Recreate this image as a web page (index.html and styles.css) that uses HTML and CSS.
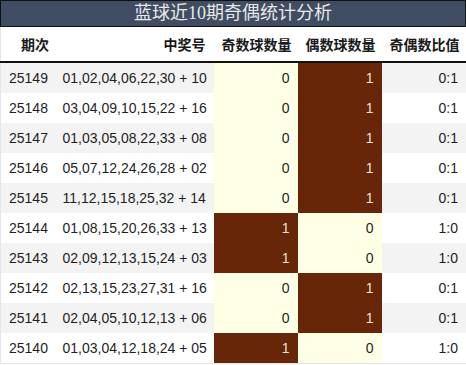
FILE: index.html
```html
<!DOCTYPE html>
<html lang="zh">
<head>
<meta charset="utf-8">
<title>蓝球近10期奇偶统计分析</title>
<link rel="stylesheet" href="styles.css">
</head>
<body>
<div class="title">蓝球近10期奇偶统计分析</div>
<table class="stats">
  <colgroup>
    <col class="c-issue"><col class="c-nums"><col class="c-odd"><col class="c-even"><col class="c-ratio">
  </colgroup>
  <thead>
    <tr><th class="first">期次</th><th class="nums">中奖号</th><th>奇数球数量</th><th>偶数球数量</th><th>奇偶数比值</th></tr>
  </thead>
  <tbody>
    <tr><td class="first">25149</td><td class="nums">01,02,04,06,22,30 + 10</td><td class="no">0</td><td class="yes">1</td><td>0:1</td></tr>
    <tr><td class="first">25148</td><td class="nums">03,04,09,10,15,22 + 16</td><td class="no">0</td><td class="yes">1</td><td>0:1</td></tr>
    <tr><td class="first">25147</td><td class="nums">01,03,05,08,22,33 + 08</td><td class="no">0</td><td class="yes">1</td><td>0:1</td></tr>
    <tr><td class="first">25146</td><td class="nums">05,07,12,24,26,28 + 02</td><td class="no">0</td><td class="yes">1</td><td>0:1</td></tr>
    <tr><td class="first">25145</td><td class="nums">11,12,15,18,25,32 + 14</td><td class="no">0</td><td class="yes">1</td><td>0:1</td></tr>
    <tr><td class="first">25144</td><td class="nums">01,08,15,20,26,33 + 13</td><td class="yes">1</td><td class="no">0</td><td>1:0</td></tr>
    <tr><td class="first">25143</td><td class="nums">02,09,12,13,15,24 + 03</td><td class="yes">1</td><td class="no">0</td><td>1:0</td></tr>
    <tr><td class="first">25142</td><td class="nums">02,13,15,23,27,31 + 16</td><td class="no">0</td><td class="yes">1</td><td>0:1</td></tr>
    <tr><td class="first">25141</td><td class="nums">02,04,05,10,12,13 + 06</td><td class="no">0</td><td class="yes">1</td><td>0:1</td></tr>
    <tr><td class="first">25140</td><td class="nums">01,03,04,12,18,24 + 05</td><td class="yes">1</td><td class="no">0</td><td>1:0</td></tr>
  </tbody>
</table>
</body>
</html>
```
FILE: styles.css
```css
html, body {
  margin: 0;
  padding: 0;
  background: #ffffff;
}

.title {
  box-sizing: border-box;
  width: 466px;
  height: 27px;
  border: 1px solid #111111;
  background: #3f4c62;
  color: #e8e8e8;
  font-family: "Liberation Serif", "Noto Sans CJK SC", serif;
  font-size: 18px;
  line-height: 25px;
  text-align: center;
}

.stats {
  width: 466px;
  table-layout: fixed;
  border-collapse: collapse;
  font-family: "Liberation Sans", "Noto Sans CJK SC", sans-serif;
  font-size: 14px;
  color: #1e1e1e;
  border-left: 1px solid #e6e6e6;
  border-right: 1px solid #e6e6e6;
  border-bottom: 1px solid #e6e6e6;
}

.c-issue { width: 62px; }
.c-nums { width: 151px; }
.c-odd { width: 84px; }
.c-even { width: 84px; }
.c-ratio { width: 85px; }

.stats th {
  height: 34px;
  padding: 0 8px;
  text-align: right;
  font-weight: bold;
  color: #1a1a1a;
  border-bottom: 2px solid #111111;
  white-space: nowrap;
}

.stats th.first {
  text-align: left;
  padding-left: 20px;
}

.stats td {
  height: 30px;
  padding: 0 8px;
  text-align: right;
  white-space: nowrap;
}

.stats td.first {
  text-align: left;
  padding-left: 8px;
}

.stats .nums {
  padding-left: 0;
}

.stats tbody tr:nth-child(odd) {
  background: #f3f3f3;
}

.stats td.no {
  background: #ffffe6;
  color: #1e1e1e;
}

.stats td.yes {
  background: #662607;
  color: #ece4de;
}
```
